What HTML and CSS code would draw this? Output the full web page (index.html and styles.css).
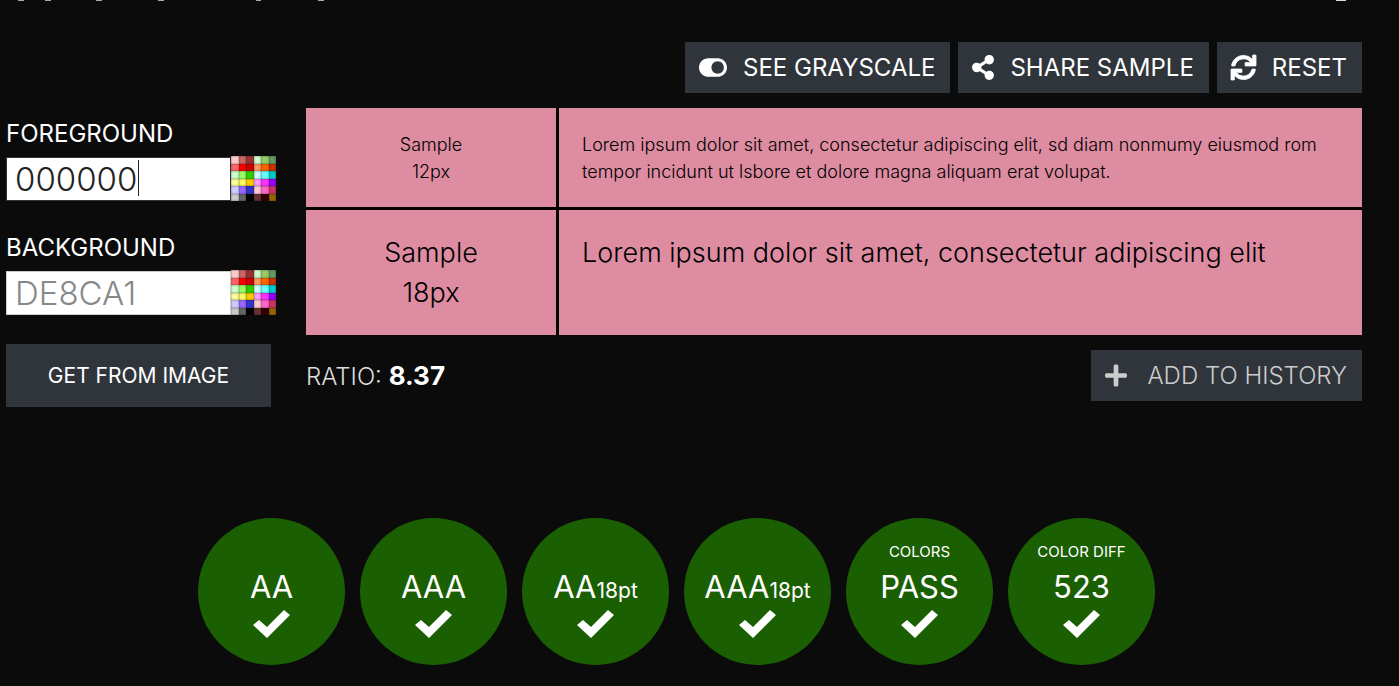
FILE: index.html
```html
<!DOCTYPE html>
<html lang="en">
<head>
<meta charset="utf-8">
<title>Contrast Checker</title>
<link rel="stylesheet" href="styles.css">
</head>
<body>
<svg class="edge edge-left" width="330" height="1" viewBox="0 0 330 1" aria-hidden="true"><path d="M18 0h6v1h-6zM45 0h6v1h-6zM96 0h6v1h-6zM158 0h6v1h-6zM256 0h5v1h-5zM318 0h6v1h-6z"/></svg>
<svg class="edge edge-right" width="10" height="1" viewBox="0 0 10 1" aria-hidden="true"><path d="M0 0h10v1H0z"/></svg>
<main class="page">
  <div class="toolbar">
    <button class="btn" type="button"><svg width="28" height="25" viewBox="0 0 576 512"><path d="M384 64H192C86 64 0 150 0 256s86 192 192 192h192c106 0 192-86 192-192S490 64 384 64zm0 320c-70.800 0-128-57.300-128-128 0-70.800 57.200-128 128-128 70.800 0 128 57.200 128 128 0 70.700-57.300 128-128 128z"/></svg>SEE GRAYSCALE</button>
    <button class="btn" type="button"><svg width="22" height="25" viewBox="0 0 448 512"><path d="M352 320c-22.608 0-43.387 7.819-59.790 20.895l-102.486-64.054a96.551 96.551 0 0 0 0-41.683l102.486-64.054C308.613 184.181 329.392 192 352 192c53.019 0 96-42.981 96-96S405.019 0 352 0s-96 42.981-96 96c0 7.158.79 14.130 2.276 20.841L155.790 180.895C139.387 167.819 118.608 160 96 160c-53.019 0-96 42.981-96 96s42.981 96 96 96c22.608 0 43.387-7.819 59.790-20.895l102.486 64.054A96.301 96.301 0 0 0 256 416c0 53.019 42.981 96 96 96s96-42.981 96-96-42.981-96-96-96z"/></svg>SHARE SAMPLE</button>
    <button class="btn" type="button"><svg class="bold" width="25" height="25" viewBox="0 0 512 512"><path d="M440.650 12.570l4 82.770A247.160 247.160 0 0 0 255.830 8C134.730 8 33.910 94.920 12.290 209.820A12 12 0 0 0 24.090 224h49.050a12 12 0 0 0 11.670-9.260 175.910 175.910 0 0 1 317-56.940l-101.460-4.860a12 12 0 0 0-12.570 12v47.410a12 12 0 0 0 12 12H500a12 12 0 0 0 12-12V12a12 12 0 0 0-12-12h-47.370a12 12 0 0 0-11.980 12.570zM255.830 432a175.610 175.610 0 0 1-146-77.800l101.800 4.870a12 12 0 0 0 12.570-12v-47.400a12 12 0 0 0-12-12H12a12 12 0 0 0-12 12V500a12 12 0 0 0 12 12h47.350a12 12 0 0 0 12-12.600l-4.150-82.570A247.170 247.170 0 0 0 255.830 504c121.110 0 221.930-86.920 243.550-201.820a12 12 0 0 0-11.800-14.180h-49.050a12 12 0 0 0-11.670 9.260A175.860 175.860 0 0 1 255.830 432z"/></svg>RESET</button>
  </div>
  <div class="workspace">
    <form class="controls">
      <div class="field">
        <label for="fg">FOREGROUND</label>
        <div class="field-row">
          <input id="fg" class="active" type="text" value="000000">
          <span class="caret" aria-hidden="true"></span>
          <button class="palette" type="button" aria-label="Pick foreground"></button>
        </div>
      </div>
      <div class="field">
        <label for="bg">BACKGROUND</label>
        <div class="field-row">
          <input id="bg" type="text" value="DE8CA1">
          <button class="palette" type="button" aria-label="Pick background"></button>
        </div>
      </div>
      <button class="image-btn" type="button">GET FROM IMAGE</button>
    </form>
    <section class="preview">
      <div class="samples">
        <div class="cell small center">Sample<br>12px</div>
        <div class="cell small">Lorem ipsum dolor sit amet, consectetur adipiscing elit, sd diam nonmumy eiusmod rom tempor incidunt ut lsbore et dolore magna aliquam erat volupat.</div>
        <div class="cell large center">Sample<br>18px</div>
        <div class="cell large">Lorem ipsum dolor sit amet, consectetur adipiscing elit</div>
      </div>
      <div class="summary">
        <p class="ratio">RATIO: <strong>8.37</strong></p>
        <button class="btn muted" type="button"><svg width="22" height="25" viewBox="0 0 448 512"><path d="M416 208H272V64c0-17.670-14.330-32-32-32h-32c-17.670 0-32 14.330-32 32v144H32c-17.670 0-32 14.330-32 32v32c0 17.670 14.330 32 32 32h144v144c0 17.670 14.330 32 32 32h32c17.670 0 32-14.330 32-32V304h144c17.670 0 32-14.330 32-32v-32c0-17.670-14.330-32-32-32z"/></svg>ADD TO HISTORY</button>
      </div>
    </section>
  </div>
  <ul class="results">
    <li><span class="kind"></span><span class="grade">AA</span><svg class="check" viewBox="0 0 37 28"><path d="M0 15L6 10L14 17L31 0L37 5L14 28z"/></svg></li>
    <li><span class="kind"></span><span class="grade">AAA</span><svg class="check" viewBox="0 0 37 28"><path d="M0 15L6 10L14 17L31 0L37 5L14 28z"/></svg></li>
    <li><span class="kind"></span><span class="grade">AA<small>18pt</small></span><svg class="check" viewBox="0 0 37 28"><path d="M0 15L6 10L14 17L31 0L37 5L14 28z"/></svg></li>
    <li><span class="kind"></span><span class="grade">AAA<small>18pt</small></span><svg class="check" viewBox="0 0 37 28"><path d="M0 15L6 10L14 17L31 0L37 5L14 28z"/></svg></li>
    <li><span class="kind">COLORS</span><span class="grade">PASS</span><svg class="check" viewBox="0 0 37 28"><path d="M0 15L6 10L14 17L31 0L37 5L14 28z"/></svg></li>
    <li><span class="kind">COLOR DIFF</span><span class="grade">523</span><svg class="check" viewBox="0 0 37 28"><path d="M0 15L6 10L14 17L31 0L37 5L14 28z"/></svg></li>
  </ul>
</main>
<script src="palette.js"></script>
</body>
</html>
```

FILE: palette.js
```js
const colors = [
  "fcc", "c66", "933", "cfc", "9c6", "696",
  "f66", "f00", "c00", "f96", "f60", "c30",
  "cfc", "9f6", "3c0", "cff", "6ff", "0cc",
  "ff9", "ff6", "fc0", "f9f", "f3f", "90f",
  "ccf", "96f", "33c", "fcc", "f6c", "c36",
  "ccc", "666", "000", "633", "300", "960"
];
document.querySelectorAll(".palette").forEach((palette) => {
  colors.forEach((color) => {
    const cell = document.createElement("span");
    cell.style.backgroundColor = "#" + color;
    palette.append(cell);
  });
});
```

FILE: styles.css
```css
* { box-sizing: border-box; }
body {
  margin: 0;
  background: #0b0b0b;
  color: #fff;
  font-family: Inter, "Liberation Sans", sans-serif;
}
button, input { font-family: inherit; border: 0; margin: 0; border-radius: 0; }
.edge { position: absolute; top: 0; fill: #aaa; }
.edge-left { left: 0; }
.edge-right { right: 53px; fill: #ddd; }
.page { padding: 42px 37px 21px 6px; }
.toolbar { display: flex; justify-content: flex-end; gap: 8px; }
.btn {
  display: flex;
  align-items: center;
  gap: 16px;
  height: 51px;
  padding: 0 15px 0 14px;
  background: #30353c;
  color: #fff;
  font-size: 24px;
  white-space: nowrap;
}
.btn svg { fill: currentColor; flex: none; }
.btn .bold { stroke: currentColor; stroke-width: 16px; overflow: visible; }
.workspace { display: flex; gap: 30px; margin-top: 15px; }
.controls { width: 270px; flex: none; padding-top: 11px; }
.field { margin-bottom: 32px; }
.field + .field { margin-bottom: 29px; }
.field label { display: block; font-size: 24px; line-height: 30px; margin-bottom: 7px; }
.field-row { display: flex; align-items: flex-end; position: relative; }
.field input {
  flex: 1;
  min-width: 0;
  height: 44px;
  padding: 0 8px;
  border: 1px solid #ccc;
  background: #fff;
  color: #888;
  font-size: 33px;
  font-weight: 300;
  outline: 0;
}
.field input.active { border-color: #333; color: #222; }
.caret { position: absolute; left: 132px; top: 4px; width: 1px; height: 36px; background: #222; }
.palette {
  display: grid;
  grid-template-columns: repeat(6, 1fr);
  grid-template-rows: repeat(6, 1fr);
  width: 45px;
  height: 45px;
  padding: 0;
  background: #222;
}
.palette span { box-shadow: inset 0 0 2px rgba(0, 0, 0, .6); }
.image-btn { width: 265px; height: 63px; background: #30353c; color: #fff; font-size: 21px; }
.preview { flex: 1; min-width: 0; }
.samples { display: grid; grid-template-columns: 250px 1fr; grid-template-rows: 99px 125px; gap: 3px; background: #000; }
.cell { padding: 23px; background: #de8ca1; color: #000; font-weight: 300; }
.small { font-size: 18px; line-height: 27px; }
.large { font-size: 27px; line-height: 40px; }
.center { text-align: center; }
.summary { display: flex; align-items: center; justify-content: space-between; margin-top: 15px; }
.ratio { margin: 0; color: #ddd; font-size: 24px; font-weight: 300; }
.ratio strong { color: #fff; font-size: 26px; font-weight: 700; }
.muted { gap: 20px; color: #ccc; font-weight: 300; }
.results { display: flex; justify-content: center; margin: 111px 0 0; padding: 0; list-style: none; }
.results li {
  display: flex;
  flex-direction: column;
  align-items: center;
  width: 147px;
  height: 147px;
  margin-right: 15px;
  padding-top: 22px;
  border-radius: 50%;
  background: #1b5f03;
}
.kind { height: 24px; font-size: 15px; line-height: 24px; }
.grade { height: 46px; font-size: 31px; line-height: 46px; }
.grade small { font-size: 21px; line-height: 1; }
.check { width: 37px; height: 28px; fill: #fff; }
```
